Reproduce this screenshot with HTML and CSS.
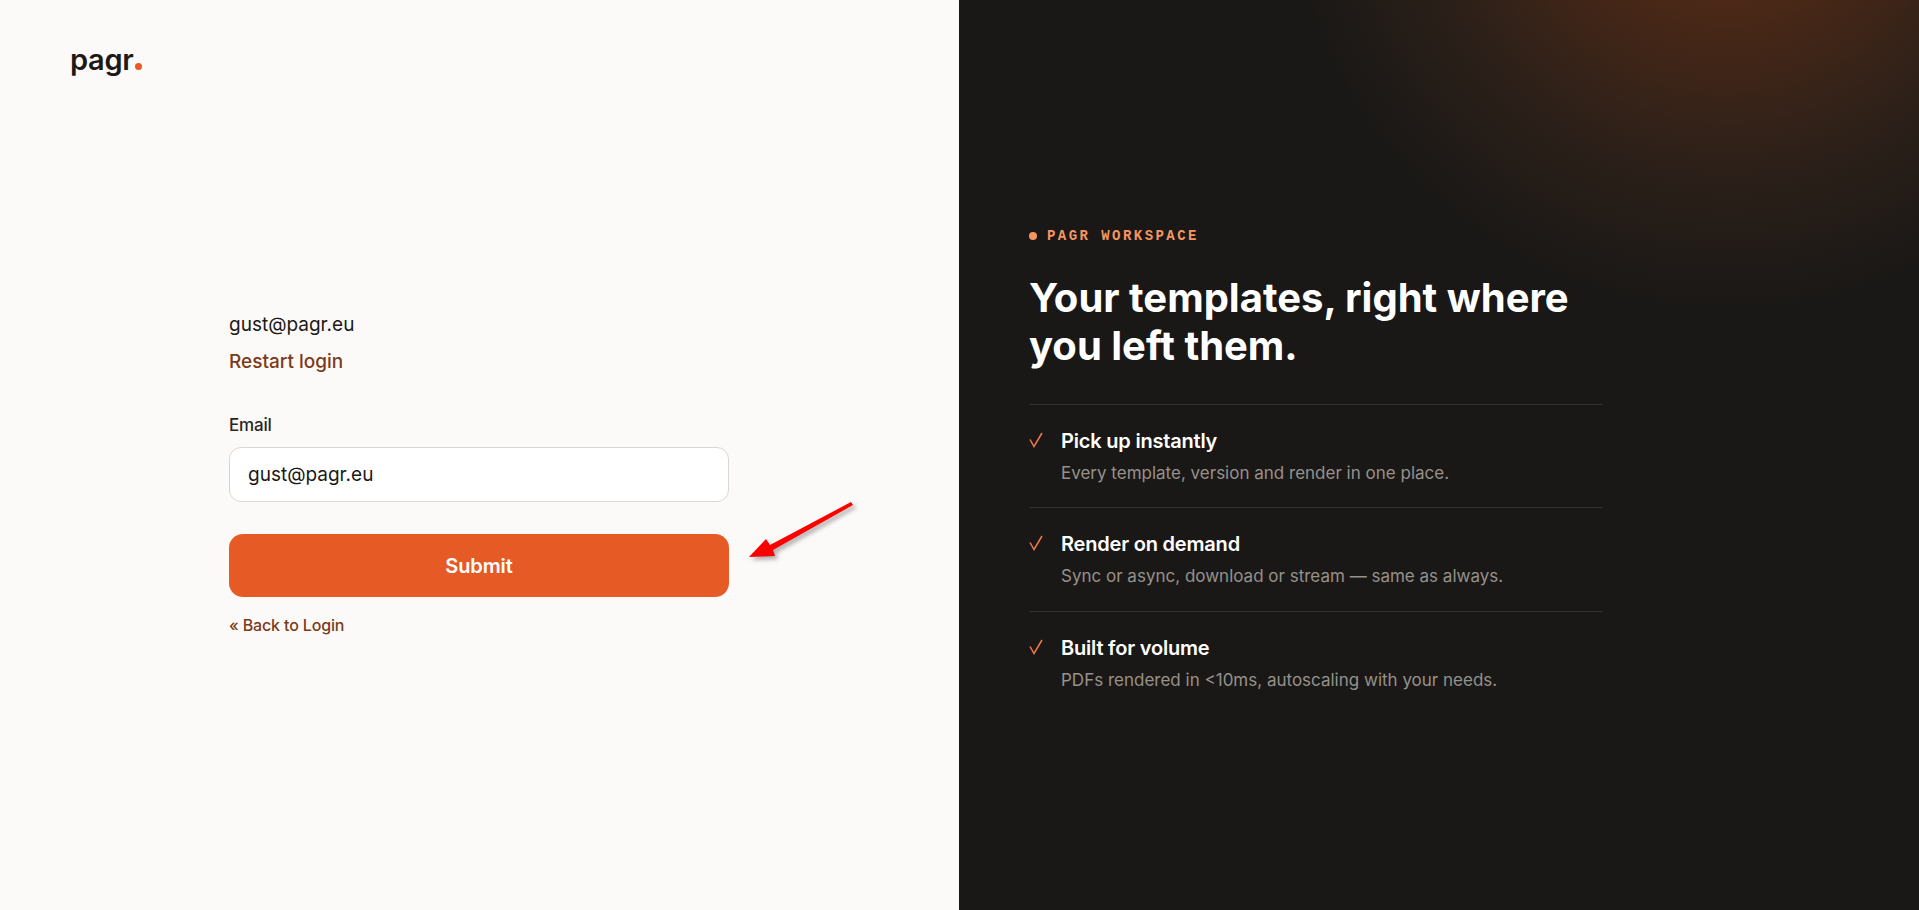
FILE: index.html
```html
<!DOCTYPE html>
<html lang="en">
<head>
  <meta charset="UTF-8">
  <meta name="viewport" content="width=device-width, initial-scale=1.0">
  <title>Pagr - Login</title>
  <link rel="stylesheet" href="styles.css">
</head>
<body>
  <div class="login-page">
    <section class="login-side">
      <a class="logo" href="#">pagr<span class="logo-dot"></span></a>
      <div class="login-box">
        <p class="login-user">gust@pagr.eu</p>
        <a class="restart-link" href="#">Restart login</a>
        <form class="login-form">
          <label class="field-label" for="email">Email</label>
          <input class="field-input" id="email" type="text" value="gust@pagr.eu">
          <button class="submit-btn" type="button">Submit</button>
        </form>
        <a class="back-link" href="#">« Back to Login</a>
      </div>
    </section>

    <section class="promo-side">
      <div class="promo-content">
        <p class="eyebrow"><span class="eyebrow-dot"></span>PAGR WORKSPACE</p>
        <h1 class="promo-title">Your templates, right where you left them.</h1>
        <ul class="feature-list">
          <li class="feature">
            <svg class="check" viewBox="0 0 14 16"><path d="M1 7.5L5 14.5L13 1"/></svg>
            <div>
              <h2 class="feature-title">Pick up instantly</h2>
              <p class="feature-text">Every template, version and render in one place.</p>
            </div>
          </li>
          <li class="feature">
            <svg class="check" viewBox="0 0 14 16"><path d="M1 7.5L5 14.5L13 1"/></svg>
            <div>
              <h2 class="feature-title">Render on demand</h2>
              <p class="feature-text">Sync or async, download or stream — same as always.</p>
            </div>
          </li>
          <li class="feature">
            <svg class="check" viewBox="0 0 14 16"><path d="M1 7.5L5 14.5L13 1"/></svg>
            <div>
              <h2 class="feature-title">Built for volume</h2>
              <p class="feature-text">PDFs rendered in &lt;10ms, autoscaling with your needs.</p>
            </div>
          </li>
        </ul>
      </div>
    </section>

    <!-- annotation arrow on top of the screenshot -->
    <svg class="arrow" viewBox="0 0 115 65"><path d="M4 59L21 41L25 47L106 4L108 7L28 52L30 58Z"/></svg>
  </div>
</body>
</html>
```

FILE: styles.css
```css
* {
  box-sizing: border-box;
}

body {
  margin: 0;
  font-family: Inter, "Open Sans", sans-serif;
  color: #1c1917;
  background: #fcfaf8;
}

.login-page {
  position: relative;
  display: grid;
  grid-template-columns: 959px 1fr;
  height: 910px;
  overflow: hidden;
}

/* left side */
.login-side {
  padding: 40px 70px 0;
  background: #fcfaf8;
}

.logo {
  display: block;
  height: 40px;
  font-size: 29px;
  line-height: 40px;
  font-weight: 600;
  letter-spacing: -0.3px;
  color: #1c1917;
  text-decoration: none;
}

.logo-dot {
  display: inline-block;
  width: 7px;
  height: 7px;
  margin-left: 2px;
  border-radius: 50%;
  background: #e85a24;
}

.login-box {
  width: 500px;
  margin: 232px 0 0 159px;
}

.login-user {
  margin: 0;
  font-size: 19px;
  line-height: 26px;
  font-weight: 400;
  letter-spacing: 0;
}

.restart-link {
  display: block;
  margin-top: 11px;
  font-size: 19px;
  line-height: 26px;
  font-weight: 500;
  letter-spacing: 0;
  color: #7c3a1a;
  text-decoration: none;
}

.login-form {
  margin-top: 38px;
}

.field-label {
  display: block;
  font-size: 17px;
  line-height: 24px;
  font-weight: 500;
  letter-spacing: -0.2px;
  color: #292524;
}

.field-input {
  display: block;
  width: 100%;
  height: 55px;
  margin-top: 10px;
  padding: 0 18px;
  font-family: inherit;
  font-size: 19px;
  font-weight: 400;
  letter-spacing: 0;
  color: #1c1917;
  background: #fff;
  border: 1px solid #d9d6d3;
  border-radius: 12px;
}

.submit-btn {
  display: block;
  width: 100%;
  height: 63px;
  margin-top: 32px;
  font-family: inherit;
  font-size: 20px;
  font-weight: 600;
  letter-spacing: -0.1px;
  color: #fff;
  background: #e65a25;
  border: 0;
  border-radius: 14px;
}

.back-link {
  display: block;
  margin-top: 16px;
  font-size: 16px;
  line-height: 24px;
  font-weight: 500;
  letter-spacing: -0.15px;
  color: #7c3a1a;
  text-decoration: none;
}

/* right side */
.promo-side {
  display: flex;
  flex-direction: column;
  justify-content: center;
  padding: 0 0 0 70px;
  background: radial-gradient(circle 440px at 767px -130px, #5c2c14 0%, #4a2817 32%, #2c2019 68%, #1a1816 100%), #1a1816;
}

.promo-content {
  width: 574px;
  padding-top: 30px;
}

.eyebrow {
  display: flex;
  align-items: center;
  gap: 10px;
  margin: 0;
  font-family: "Liberation Mono", monospace;
  font-size: 14px;
  line-height: 20px;
  font-weight: 700;
  letter-spacing: 2.45px;
  color: #f5965f;
}

.eyebrow-dot {
  width: 8px;
  height: 8px;
  border-radius: 50%;
  background: #f5965f;
}

.promo-title {
  margin: 28px 0 0;
  font-size: 40px;
  line-height: 48px;
  font-weight: 700;
  letter-spacing: 0;
  color: #fff;
}

.feature-list {
  margin: 34px 0 0;
  padding: 0;
  list-style: none;
}

.feature {
  display: flex;
  gap: 18px;
  height: 103.5px;
  padding-top: 23px;
  border-top: 1px solid #37332f;
}

.check {
  flex: none;
  width: 14px;
  height: 16px;
  margin-top: 4px;
  fill: none;
  stroke: #f0794a;
  stroke-width: 1.5;
}

.feature-title {
  margin: 0;
  font-size: 20px;
  line-height: 26px;
  font-weight: 600;
  letter-spacing: -0.2px;
  color: #fff;
}

.feature-text {
  margin: 7px 0 0;
  font-size: 17px;
  line-height: 24px;
  letter-spacing: 0;
  color: #96918b;
}

/* annotation */
.arrow {
  position: absolute;
  left: 745px;
  top: 498px;
  width: 115px;
  height: 65px;
  fill: #f00;
  filter: drop-shadow(3px 3px 2px rgba(0, 0, 0, 0.3));
}
```
